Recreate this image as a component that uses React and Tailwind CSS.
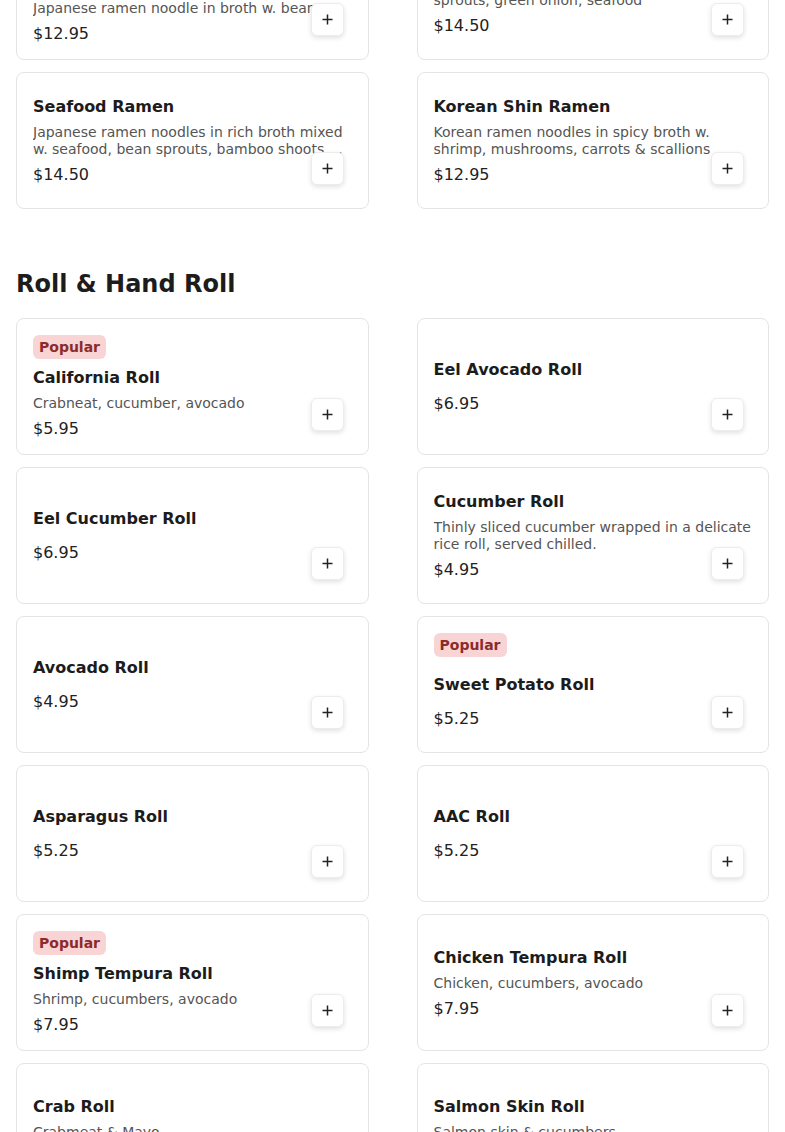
const ramen = [
  {
    name: 'Miso Ramen',
    desc: 'Japanese ramen noodle in broth w. bean sprouts, corn & scallions',
    price: '12.95',
    popular: true,
    clamp: 1,
  },
  {
    name: 'Seafood Udon',
    desc: 'Japanese udon noodles in broth w. bean sprouts, green onion, seafood',
    price: '14.50',
  },
  {
    name: 'Seafood Ramen',
    desc: 'Japanese ramen noodles in rich broth mixed w. seafood, bean sprouts, bamboo shoots, corn & scallions',
    price: '14.50',
  },
  {
    name: 'Korean Shin Ramen',
    desc: 'Korean ramen noodles in spicy broth w. shrimp, mushrooms, carrots & scallions',
    price: '12.95',
  },
];

const rolls = [
  { name: 'California Roll', desc: 'Crabneat, cucumber, avocado', price: '5.95', popular: true },
  { name: 'Eel Avocado Roll', price: '6.95' },
  { name: 'Eel Cucumber Roll', price: '6.95' },
  { name: 'Cucumber Roll', desc: 'Thinly sliced cucumber wrapped in a delicate rice roll, served chilled.', price: '4.95' },
  { name: 'Avocado Roll', price: '4.95' },
  { name: 'Sweet Potato Roll', price: '5.25', popular: true },
  { name: 'Asparagus Roll', price: '5.25' },
  { name: 'AAC Roll', price: '5.25' },
  { name: 'Shimp Tempura Roll', desc: 'Shrimp, cucumbers, avocado', price: '7.95', popular: true },
  { name: 'Chicken Tempura Roll', desc: 'Chicken, cucumbers, avocado', price: '7.95' },
  { name: 'Crab Roll', desc: 'Crabmeat & Mayo', price: '6.50' },
  { name: 'Salmon Skin Roll', desc: 'Salmon skin & cucumbers', price: '6.50' },
];

function PlusIcon() {
  return (
    <svg width="11" height="11" viewBox="0 0 11 11" fill="none">
      <path d="M5.5 0.5v10M0.5 5.5h10" stroke="#222" strokeWidth="1.5" />
    </svg>
  );
}

function MenuCard({ item }) {
  const onlyBadge = item.popular && !item.desc;
  const badgeDesc = item.popular && item.desc;
  const descOnly = !item.popular && item.desc;
  return (
    <div className="relative h-[137px] bg-white border border-[#e4e4e4] rounded-lg px-4 flex items-center">
      <div className={`flex flex-col items-start w-full ${onlyBadge ? 'pb-[5px]' : ''} ${badgeDesc ? 'pt-[3px]' : ''} ${descOnly ? 'pt-[1px]' : ''}`}>
        {item.popular && (
          <span className={`h-6 px-1.5 rounded-md bg-[#f9d4d4] text-[#8c2b2b] text-sm font-bold leading-6 ${onlyBadge ? 'mb-4' : 'mb-[7px]'}`}>
            Popular
          </span>
        )}
        <h3 className="text-base leading-6 font-bold text-[#1c1c1c]">{item.name}</h3>
        {item.desc && (
          <p className={`mt-[5px] text-sm leading-[17px] text-[#555] w-full ${item.clamp === 1 ? 'line-clamp-1' : 'line-clamp-2'}`}>
            {item.desc}
          </p>
        )}
        <p className={`text-base leading-6 text-[#222] ${item.desc ? 'mt-[5px]' : 'mt-2.5'}`}>
          ${item.price}
        </p>
      </div>
      <button className="absolute right-6 bottom-[23px] w-[33px] h-[33px] flex items-center justify-center bg-white border border-[#ececec] rounded-md shadow-[0_2px_5px_rgba(0,0,0,0.12)]">
        <PlusIcon />
      </button>
    </div>
  );
}

export default function App() {
  return (
    <div className="min-h-screen bg-white font-['DejaVu_Sans',sans-serif] px-4 overflow-hidden">
      <div className="-mt-[77px] grid grid-cols-2 gap-x-12 gap-y-3">
        {ramen.map((item) => (
          <MenuCard key={item.name} item={item} />
        ))}
      </div>

      <h2 className="mt-[59px] mb-[18px] text-2xl leading-8 font-bold text-[#1c1c1c]">Roll &amp; Hand Roll</h2>
      <div className="grid grid-cols-2 gap-x-12 gap-y-3 pb-10">
        {rolls.map((item) => (
          <MenuCard key={item.name} item={item} />
        ))}
      </div>
    </div>
  );
}
